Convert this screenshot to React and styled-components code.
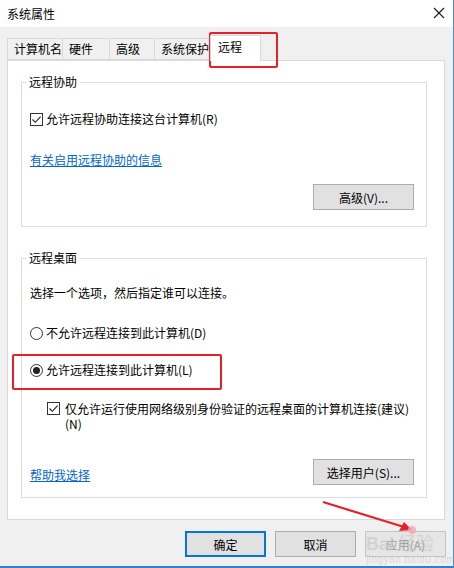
import React from 'react'
import styled, { createGlobalStyle } from 'styled-components'

const GlobalStyle = createGlobalStyle`
  html, body { margin:0; padding:0; background:#fff; }
  body {
    font-family:"Noto Sans CJK SC","Noto Sans",sans-serif;
    font-size:12px;
    color:#000;
  }
  *{ box-sizing:border-box; }
`

const tabs = [
    { label: '计算机名', width: 56 },
    { label: '硬件', width: 47 },
    { label: '高级', width: 45 },
    { label: '系统保护', width: 55 },
    { label: '远程', width: 51, active: true },
]

const App = () => {
    return (
        <Window>
            <GlobalStyle />
            <TitleBar>
                <Title>系统属性</Title>
                <CloseIcon width="12" height="12" viewBox="0 0 12 12">
                    <path d="M1 1 L11 11 M11 1 L1 11" stroke="#1a1a1a" strokeWidth="1.1" fill="none" />
                </CloseIcon>
            </TitleBar>
            <Body>
                <TabStrip>
                    {tabs.map(t => (
                        <Tab key={t.label} $active={t.active} $width={t.width}>{t.label}</Tab>
                    ))}
                </TabStrip>
                <Panel>
                    <Group>
                        <Legend>远程协助</Legend>
                        <CheckRow $top={21}>
                            <CheckBox checked />
                            <span>允许远程协助连接这台计算机(R)</span>
                        </CheckRow>
                        <LinkText $top={25}>有关启用远程协助的信息</LinkText>
                        <ButtonRow $top={16} $end>
                            <Button $width={101}>高级(V)...</Button>
                        </ButtonRow>
                    </Group>

                    <Group $top={23}>
                        <Legend>远程桌面</Legend>
                        <Line $top={19}>选择一个选项，然后指定谁可以连接。</Line>
                        <CheckRow $top={24}>
                            <Radio />
                            <span>不允许远程连接到此计算机(D)</span>
                        </CheckRow>
                        <CheckRow $top={21}>
                            <Radio checked />
                            <span>允许远程连接到此计算机(L)</span>
                        </CheckRow>
                        <CheckRow $top={23} $indent={17} $wrap>
                            <CheckBox checked />
                            <span>仅允许运行使用网络级别身份验证的远程桌面的计算机连接(建议)<br />(N)</span>
                        </CheckRow>
                        <ButtonRow $top={28}>
                            <LinkText $top={6}>帮助我选择</LinkText>
                            <Button $width={101}>选择用户(S)...</Button>
                        </ButtonRow>
                    </Group>
                </Panel>
                <Footer>
                    <Button $width={81} $primary>确定</Button>
                    <Button $width={81}>取消</Button>
                    <Button $width={81} $disabled>应用(A)</Button>
                </Footer>
            </Body>

            <Highlight style={{ left: 209, top: 32, width: 69, height: 36 }} />
            <Highlight style={{ left: 12, top: 354, width: 210, height: 36 }} />
            <Arrow width="454" height="568" viewBox="0 0 454 568">
                <line x1="323" y1="502" x2="404" y2="527" stroke="#e3222a" strokeWidth="2.2" />
                <path d="M412 530 L399 531 L404 522 Z" fill="#e3222a" />
                <circle cx="412" cy="530" r="4" fill="#f4a6ad" opacity="0.8" />
            </Arrow>
            <Watermark>
                <WatermarkBrand><strong>Bai</strong>经验</WatermarkBrand>
                <WatermarkUrl>jingyan.baidu.com</WatermarkUrl>
            </Watermark>
        </Window>
    )
}

export default App

const Window = styled.div`
    position:relative;
    width:454px;
    height:568px;
    display:flex;
    flex-direction:column;
    border-right:1px solid #4a8fd4;
    border-bottom:2px solid #2f7fcf;
    overflow:hidden;
    background:#f0f0f0;
`

const TitleBar = styled.div`
    height:27px;
    flex:none;
    background:#fff;
    display:flex;
    align-items:center;
    justify-content:space-between;
    padding:0 8px 0 7px;
`

const Title = styled.div`
    font-size:12px;
    line-height:16px;
`

const CloseIcon = styled.svg`
    display:block;
    margin-top:-1px;
`

const Body = styled.div`
    flex:1;
    display:flex;
    flex-direction:column;
    padding:8px 8px 0 7px;
`

const TabStrip = styled.div`
    display:flex;
    align-items:flex-end;
    height:25px;
`

const Tab = styled.div`
    position:relative;
    z-index:${p => p.$active ? 2 : 0};
    width:${p => p.$width}px;
    height:${p => p.$active ? 26 : 22}px;
    margin-bottom:${p => p.$active ? -1 : 0}px;
    padding:${p => p.$active ? '3px 0 0 7px' : '2px 0 0 6px'};
    background:${p => p.$active ? '#fff' : '#f0f0f0'};
    border:1px solid #d9d9d9;
    border-bottom:${p => p.$active ? 'none' : '1px solid #d9d9d9'};
    border-left:${p => p.$active ? '1px solid #d9d9d9' : 'none'};
    &:first-child{ border-left:1px solid #d9d9d9; }
    font-size:12px;
    line-height:16px;
    white-space:nowrap;
`

const Panel = styled.div`
    height:460px;
    background:#fff;
    border:1px solid #d9d9d9;
    padding:13px 17px 0 13px;
`

const Group = styled.fieldset`
    margin:${p => p.$top || 0}px 0 0 0;
    padding:0 12px 12px 8px;
    border:1px solid #dcdcdc;
    min-inline-size:0;
    display:flex;
    flex-direction:column;
    &:first-child{ padding-bottom:16px; }
`

const Legend = styled.legend`
    margin-left:-4px;
    padding:0 3px;
    font-size:12px;
    line-height:16px;
`

const CheckRow = styled.label`
    display:flex;
    align-items:${p => p.$wrap ? 'flex-start' : 'center'};
    gap:3px;
    margin-top:${p => p.$top || 0}px;
    margin-left:${p => p.$indent || 0}px;
    line-height:${p => p.$wrap ? 15 : 16}px;
    font-size:12px;
    & > span{ padding-left:${p => p.$wrap ? 2 : 0}px; }
    & > div{ margin-top:${p => p.$wrap ? 1 : 0}px; }
`

const BoxBase = styled.div`
    flex:none;
    width:13px;
    height:13px;
    background:#fff;
    border:1px solid #333;
    display:flex;
    align-items:center;
    justify-content:center;
`

const CheckBox = ({ checked }) => (
    <BoxBase>
        {checked && (
            <svg width="11" height="11" viewBox="0 0 11 11">
                <path d="M1.5 5.5 L4.3 8.3 L9.6 2.6" stroke="#222" strokeWidth="1.1" fill="none" />
            </svg>
        )}
    </BoxBase>
)

const RadioBase = styled(BoxBase)`
    border-radius:50%;
`

const RadioDot = styled.div`
    width:7px;
    height:7px;
    border-radius:50%;
    background:#222;
`

const Radio = ({ checked }) => (
    <RadioBase>{checked && <RadioDot />}</RadioBase>
)

const Line = styled.div`
    margin-top:${p => p.$top || 0}px;
    line-height:16px;
    font-size:12px;
`

const LinkText = styled.a`
    align-self:flex-start;
    margin-top:${p => p.$top || 0}px;
    color:#0066cc;
    text-decoration:underline;
    line-height:16px;
    font-size:12px;
    cursor:pointer;
`

const ButtonRow = styled.div`
    display:flex;
    align-items:center;
    justify-content:${p => p.$end ? 'flex-end' : 'space-between'};
    margin-top:${p => p.$top || 0}px;
    & > a{ align-self:center; }
`

const Button = styled.button`
    width:${p => p.$width}px;
    height:26px;
    font-family:inherit;
    font-size:12px;
    color:${p => p.$disabled ? '#9a9a9a' : '#000'};
    background:${p => p.$disabled ? '#e6e6e6' : '#e1e1e1'};
    border:${p => p.$primary ? '2px solid #0078d7' : p.$disabled ? '1px solid #c4c4c4' : '1px solid #adadad'};
    padding:0;
`

const Footer = styled.div`
    display:flex;
    justify-content:flex-end;
    gap:9px;
    margin-top:11px;
    margin-right:-1px;
`

const Highlight = styled.div`
    position:absolute;
    border:2px solid #e5202b;
    border-radius:2px;
    pointer-events:none;
`

const Arrow = styled.svg`
    position:absolute;
    left:0;
    top:0;
    pointer-events:none;
`

const Watermark = styled.div`
    position:absolute;
    left:366px;
    top:532px;
    display:flex;
    flex-direction:column;
    color:rgba(190,190,190,0.5);
    pointer-events:none;
    white-space:nowrap;
`

const WatermarkBrand = styled.div`
    font-size:18px;
    line-height:20px;
    strong{ font-family:"Liberation Sans",sans-serif; font-weight:700; margin-right:4px; }
`

const WatermarkUrl = styled.div`
    font-family:"Liberation Sans",sans-serif;
    font-size:10px;
    line-height:12px;
    letter-spacing:0.5px;
`
